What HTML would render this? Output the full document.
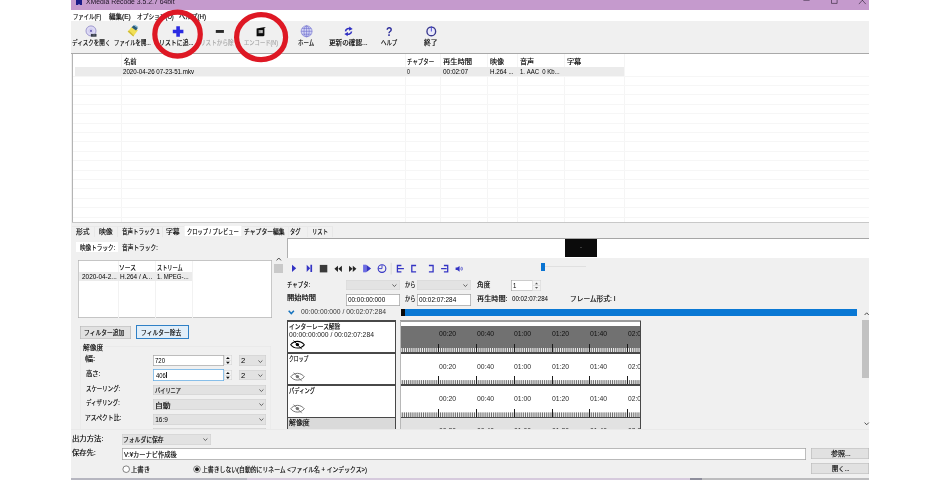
<!DOCTYPE html>
<html lang="ja"><head><meta charset="utf-8"><title>XMedia Recode 3.5.2.7 64bit</title>
<style>
html,body{margin:0;padding:0}
body{width:940px;height:480px;position:relative;overflow:hidden;background:#fff;font-family:"Liberation Sans",sans-serif;font-size:5.6px;color:#000}
.b{position:absolute;box-sizing:border-box}
.t{position:absolute;overflow:visible;display:block;stroke-width:2.2}
.t text{font-family:"Liberation Sans","Noto Sans CJK JP",sans-serif;font-size:100px}
.l{position:absolute;white-space:pre;line-height:1;transform-origin:0 50%;display:block}
.i{position:absolute;overflow:visible;display:block}
</style></head>
<body>
<div id="window" style="will-change:transform">
<div class="b" style="left:71px;top:0px;width:798px;height:478px;background:#f0f0f0;"></div>
<div id="titlebar">
<div class="b" style="left:71px;top:0px;width:798px;height:9.5px;background:#c59acd;"></div>
<div class="b" style="left:76.4px;top:0px;width:5.6px;height:4.8px;background:#1b1b88;"></div>
<div class="b" style="left:78.4px;top:3.6px;width:1.6px;height:1.2px;background:#7a6fc0;"></div>
<span class="l" style="left:86.34px;top:-1px;font-size:6.8px;color:#1e1424;transform:scaleX(1.01);">XMedia&nbsp;Recode&nbsp;3.5.2.7&nbsp;64bit</span>
<svg class="i" style="left:800px;top:0;width:69px;height:6px" viewBox="800 0 69 6" fill="none" stroke="#2a1e30" stroke-width="0.6"><path d="M803.4 0.3h6.2"/><path d="M831.5 -2v5.4h5.6v-5.4"/><path d="M858.9 4.1l3.45 -3.9l3.45 3.9M860.6 -1.4l1.75 1.6l1.75 -1.6"/></svg>
</div>
<div id="menubar">
<div class="b" style="left:71px;top:9.5px;width:798px;height:11.7px;background:#fff;"></div>
<svg class="t" style="left:73.02px;top:10.88px;width:28.28px;height:9.66px;fill:#000;stroke:#000;" viewBox="0 -110.5 522.8 140" preserveAspectRatio="none"><text x="0" y="0" textLength="522.8" lengthAdjust="spacingAndGlyphs">ファイル(F)</text></svg>
<svg class="t" style="left:108.63px;top:10.88px;width:21.79px;height:9.66px;fill:#000;stroke:#000;" viewBox="0 -110.5 326.5 140" preserveAspectRatio="none"><text x="0" y="0" textLength="326.5" lengthAdjust="spacingAndGlyphs">編集(E)</text></svg>
<svg class="t" style="left:137.31px;top:10.88px;width:36.72px;height:9.66px;fill:#000;stroke:#000;" viewBox="0 -110.5 641.8 140" preserveAspectRatio="none"><text x="0" y="0" textLength="641.8" lengthAdjust="spacingAndGlyphs">オプション(O)</text></svg>
<svg class="t" style="left:179.12px;top:10.88px;width:27.05px;height:9.66px;fill:#000;stroke:#000;" viewBox="0 -110.5 440.4 140" preserveAspectRatio="none"><text x="0" y="0" textLength="440.4" lengthAdjust="spacingAndGlyphs">ヘルプ(H)</text></svg>
</div>
<div id="toolbar">
<div class="b" style="left:71px;top:21.3px;width:798px;height:32.2px;background:#f0f0f0;"></div>
<svg class="t" style="left:71.93px;top:37.48px;width:38.47px;height:9.66px;fill:#000;stroke:#000;" viewBox="0 -110.5 700 140" preserveAspectRatio="none"><text x="0" y="0" textLength="700" lengthAdjust="spacingAndGlyphs">ディスクを開く</text></svg>
<svg class="t" style="left:113.92px;top:37.48px;width:36.77px;height:9.66px;fill:#000;stroke:#000;" viewBox="0 -110.5 683.4 140" preserveAspectRatio="none"><text x="0" y="0" textLength="683.4" lengthAdjust="spacingAndGlyphs">ファイルを開...</text></svg>
<svg class="t" style="left:158.8px;top:37.48px;width:34.53px;height:9.66px;fill:#000;stroke:#000;" viewBox="0 -110.5 583.4 140" preserveAspectRatio="none"><text x="0" y="0" textLength="583.4" lengthAdjust="spacingAndGlyphs">リストに追...</text></svg>
<svg class="t" style="left:199.97px;top:37.48px;width:33.59px;height:9.66px;fill:#a8a8a8;stroke:#a8a8a8;" viewBox="0 -110.5 600 140" preserveAspectRatio="none"><text x="0" y="0" textLength="600" lengthAdjust="spacingAndGlyphs">リストから除</text></svg>
<svg class="t" style="left:244.25px;top:37.48px;width:33.93px;height:9.66px;fill:#a8a8a8;stroke:#a8a8a8;" viewBox="0 -110.5 639.9 140" preserveAspectRatio="none"><text x="0" y="0" textLength="639.9" lengthAdjust="spacingAndGlyphs">エンコード(N)</text></svg>
<svg class="t" style="left:297.66px;top:37.48px;width:16.19px;height:9.66px;fill:#000;stroke:#000;" viewBox="0 -110.5 300 140" preserveAspectRatio="none"><text x="0" y="0" textLength="300" lengthAdjust="spacingAndGlyphs">ホーム</text></svg>
<svg class="t" style="left:328.89px;top:37.48px;width:38.59px;height:9.66px;fill:#000;stroke:#000;" viewBox="0 -110.5 583.4 140" preserveAspectRatio="none"><text x="0" y="0" textLength="583.4" lengthAdjust="spacingAndGlyphs">更新の確認...</text></svg>
<svg class="t" style="left:381.06px;top:37.48px;width:16.32px;height:9.66px;fill:#000;stroke:#000;" viewBox="0 -110.5 300 140" preserveAspectRatio="none"><text x="0" y="0" textLength="300" lengthAdjust="spacingAndGlyphs">ヘルプ</text></svg>
<svg class="t" style="left:424.33px;top:37.48px;width:13.63px;height:9.66px;fill:#000;stroke:#000;" viewBox="0 -110.5 200 140" preserveAspectRatio="none"><text x="0" y="0" textLength="200" lengthAdjust="spacingAndGlyphs">終了</text></svg>
<svg class="i" id="toolbar-icons" style="left:71px;top:21px;width:400px;height:20px" viewBox="71 21 400 20"><circle cx="91" cy="30.9" r="5" fill="#dddaf5" stroke="#9590c8" stroke-width="0.9"/><circle cx="91" cy="30.9" r="2.2" fill="none" stroke="#c4c0ea" stroke-width="0.6"/><circle cx="91" cy="30.9" r="1.1" fill="#6e64b6"/><rect x="90.9" y="33.9" width="5.6" height="2.8" fill="#343a46"/><rect x="92.6" y="34.7" width="2.6" height="0.6" fill="#8a94a4"/><path d="M127.7 31.4l4.2 -4.6l6 3.4l-4.6 6.2z" fill="#f1df56"/><path d="M127.7 31.4l5.6 5l0.7 -0.9l-5 -4.9z" fill="#cfbb38"/><path d="M131.6 27.3l2.2 -2l4 2.6l-1.8 2.6z" fill="#2b5c7c"/><path d="M133.8 25.3l1.1 -0.5l3.3 2.2l-0.4 0.9z" fill="#7fb2cf"/><path d="M176.3 26.3h3.6v3.5h3.5v3.5h-3.5v3.4h-3.6v-3.4h-3.5v-3.5h3.5z" fill="#2b2be2"/><rect x="215.8" y="30" width="8.1" height="2.9" fill="#2a2a2a"/><path d="M256.6 28.6l7.2 -1.4l2.2 -0.2l-1.6 1v7.6l-1 0.6h-6.8z" fill="#0c0c0c"/><rect x="258.6" y="30" width="4.2" height="3.2" fill="#9a9a9a"/><rect x="260.6" y="30.4" width="1.8" height="2.4" fill="#c4c4c4"/><g fill="none" stroke="#6c6ccc" stroke-width="0.6"><circle cx="306.6" cy="31.3" r="5.5" fill="#d2d3f5"/><ellipse cx="306.6" cy="31.3" rx="2.6" ry="5.5"/><path d="M306.6 25.8v11M301.1 31.3h11M302 28.4h9.2M302 34.2h9.2"/></g><g fill="none" stroke="#3030c2" stroke-width="1.6"><path d="M345.5 31.3c0.3 -2.6 3.2 -3.4 5.2 -2.3"/><path d="M351.5 31.5c-0.3 2.6 -3.2 3.4 -5.2 2.3"/></g><path d="M349.3 26.6l3.4 2.3l-3.7 1.9z" fill="#3030c2"/><path d="M347.7 36.2l-3.4 -2.3l3.7 -1.9z" fill="#3030c2"/><circle cx="431.3" cy="31.4" r="4.35" fill="#e9e9fb" stroke="#38388e" stroke-width="1.35"/><rect x="430.85" y="26.3" width="0.9" height="5.2" fill="#4040d4"/></svg>
<span class="l" style="left:386.31px;top:26px;font-size:12.5px;color:#2c2c9a;transform:scaleX(0.85);font-weight:bold;">?</span>
</div>
<div id="filelist">
<div class="b" style="left:71px;top:53.4px;width:798px;height:1.1px;background:#a9a9a9;"></div>
<div class="b" style="left:72px;top:54.2px;width:797px;height:168.1px;background:#fff;"></div>
<div class="b" style="left:71.7px;top:54.2px;width:1.1px;height:168.1px;background:#b4b4b4;"></div>
<div class="b" style="left:72px;top:221.8px;width:797px;height:0.8px;background:#c8c8c8;"></div>
<div class="b" style="left:120.75px;top:54.2px;width:0.5px;height:167.6px;background:#f5f5f5;"></div>
<div class="b" style="left:405.25px;top:54.2px;width:0.5px;height:167.6px;background:#f5f5f5;"></div>
<div class="b" style="left:440.25px;top:54.2px;width:0.5px;height:167.6px;background:#f5f5f5;"></div>
<div class="b" style="left:487.25px;top:54.2px;width:0.5px;height:167.6px;background:#f5f5f5;"></div>
<div class="b" style="left:517.25px;top:54.2px;width:0.5px;height:167.6px;background:#f5f5f5;"></div>
<div class="b" style="left:563.5px;top:54.2px;width:0.5px;height:167.6px;background:#f5f5f5;"></div>
<div class="b" style="left:623.5px;top:54.2px;width:0.5px;height:167.6px;background:#f5f5f5;"></div>
<div class="b" style="left:72.8px;top:75.65px;width:796.2px;height:0.5px;background:#f6f6f6;"></div>
<div class="b" style="left:72.8px;top:85.05px;width:796.2px;height:0.5px;background:#f6f6f6;"></div>
<div class="b" style="left:72.8px;top:94.45px;width:796.2px;height:0.5px;background:#f6f6f6;"></div>
<div class="b" style="left:72.8px;top:103.85px;width:796.2px;height:0.5px;background:#f6f6f6;"></div>
<div class="b" style="left:72.8px;top:113.25px;width:796.2px;height:0.5px;background:#f6f6f6;"></div>
<div class="b" style="left:72.8px;top:122.65px;width:796.2px;height:0.5px;background:#f6f6f6;"></div>
<div class="b" style="left:72.8px;top:132.05px;width:796.2px;height:0.5px;background:#f6f6f6;"></div>
<div class="b" style="left:72.8px;top:141.45px;width:796.2px;height:0.5px;background:#f6f6f6;"></div>
<div class="b" style="left:72.8px;top:150.85px;width:796.2px;height:0.5px;background:#f6f6f6;"></div>
<div class="b" style="left:72.8px;top:160.25px;width:796.2px;height:0.5px;background:#f6f6f6;"></div>
<div class="b" style="left:72.8px;top:169.65px;width:796.2px;height:0.5px;background:#f6f6f6;"></div>
<div class="b" style="left:72.8px;top:179.05px;width:796.2px;height:0.5px;background:#f6f6f6;"></div>
<div class="b" style="left:72.8px;top:188.45px;width:796.2px;height:0.5px;background:#f6f6f6;"></div>
<div class="b" style="left:72.8px;top:197.85px;width:796.2px;height:0.5px;background:#f6f6f6;"></div>
<div class="b" style="left:72.8px;top:207.25px;width:796.2px;height:0.5px;background:#f6f6f6;"></div>
<div class="b" style="left:72.8px;top:216.65px;width:796.2px;height:0.5px;background:#f6f6f6;"></div>
<div class="b" style="left:75px;top:66.8px;width:548.75px;height:8.95px;background:#ebebeb;"></div>
<svg class="t" style="left:123.99px;top:55.98px;width:12.54px;height:9.66px;fill:#000;stroke:#000;" viewBox="0 -110.5 200 140" preserveAspectRatio="none"><text x="0" y="0" textLength="200" lengthAdjust="spacingAndGlyphs">名前</text></svg>
<svg class="t" style="left:407.02px;top:55.98px;width:27.29px;height:9.66px;fill:#000;stroke:#000;" viewBox="0 -110.5 500 140" preserveAspectRatio="none"><text x="0" y="0" textLength="500" lengthAdjust="spacingAndGlyphs">チャプター</text></svg>
<svg class="t" style="left:442.71px;top:55.98px;width:29.15px;height:9.66px;fill:#000;stroke:#000;" viewBox="0 -110.5 400 140" preserveAspectRatio="none"><text x="0" y="0" textLength="400" lengthAdjust="spacingAndGlyphs">再生時間</text></svg>
<svg class="t" style="left:489.97px;top:55.98px;width:14.01px;height:9.66px;fill:#000;stroke:#000;" viewBox="0 -110.5 200 140" preserveAspectRatio="none"><text x="0" y="0" textLength="200" lengthAdjust="spacingAndGlyphs">映像</text></svg>
<svg class="t" style="left:520.11px;top:55.98px;width:14.13px;height:9.66px;fill:#000;stroke:#000;" viewBox="0 -110.5 200 140" preserveAspectRatio="none"><text x="0" y="0" textLength="200" lengthAdjust="spacingAndGlyphs">音声</text></svg>
<svg class="t" style="left:566.5px;top:55.98px;width:14.22px;height:9.66px;fill:#000;stroke:#000;" viewBox="0 -110.5 200 140" preserveAspectRatio="none"><text x="0" y="0" textLength="200" lengthAdjust="spacingAndGlyphs">字幕</text></svg>
<span class="l" style="left:123.19px;top:69px;font-size:6.5px;color:#000;transform:scaleX(0.95);">2020-04-26&nbsp;07-23-51.mkv</span>
<span class="l" style="left:407.3px;top:69px;font-size:6.5px;color:#000;transform:scaleX(0.81);">0</span>
<span class="l" style="left:442.75px;top:69px;font-size:6.5px;color:#000;transform:scaleX(0.99);">00:02:07</span>
<span class="l" style="left:489.99px;top:69px;font-size:6.5px;color:#000;transform:scaleX(0.96);">H.264&nbsp;...</span>
<span class="l" style="left:520.05px;top:69px;font-size:6.5px;color:#000;transform:scaleX(0.92);">1.&nbsp;AAC&nbsp;&nbsp;0&nbsp;Kb...</span>
</div>
<div id="tabs">
<div class="b" style="left:94.1px;top:226px;width:0.6px;height:10.8px;background:#e8e8e8;"></div>
<div class="b" style="left:117.1px;top:226px;width:0.6px;height:10.8px;background:#e8e8e8;"></div>
<div class="b" style="left:161.9px;top:226px;width:0.6px;height:10.8px;background:#e8e8e8;"></div>
<div class="b" style="left:71.8px;top:225.8px;width:112px;height:0.5px;background:#e9e9e9;"></div>
<div class="b" style="left:241.3px;top:225.8px;width:90.7px;height:0.5px;background:#e9e9e9;"></div>
<div class="b" style="left:332px;top:226px;width:0.5px;height:10.8px;background:#e8e8e8;"></div>
<div class="b" style="left:288px;top:226px;width:0.5px;height:10.8px;background:#eaeaea;"></div>
<div class="b" style="left:306.5px;top:226px;width:0.5px;height:10.8px;background:#eaeaea;"></div>
<div class="b" style="left:184.2px;top:225.2px;width:57.4px;height:11.6px;background:#fff;box-shadow:inset 0 0 0 0.4px #e4e4e4;"></div>
<svg class="t" style="left:76.35px;top:225.88px;width:13.68px;height:9.66px;fill:#000;stroke:#000;" viewBox="0 -110.5 200 140" preserveAspectRatio="none"><text x="0" y="0" textLength="200" lengthAdjust="spacingAndGlyphs">形式</text></svg>
<svg class="t" style="left:98.78px;top:225.88px;width:13.74px;height:9.66px;fill:#000;stroke:#000;" viewBox="0 -110.5 200 140" preserveAspectRatio="none"><text x="0" y="0" textLength="200" lengthAdjust="spacingAndGlyphs">映像</text></svg>
<svg class="t" style="left:121.8px;top:225.88px;width:37.46px;height:9.66px;fill:#000;stroke:#000;" viewBox="0 -110.5 685.5 140" preserveAspectRatio="none"><text x="0" y="0" textLength="685.5" lengthAdjust="spacingAndGlyphs">音声トラック 1</text></svg>
<svg class="t" style="left:165.82px;top:225.88px;width:13.59px;height:9.66px;fill:#000;stroke:#000;" viewBox="0 -110.5 200 140" preserveAspectRatio="none"><text x="0" y="0" textLength="200" lengthAdjust="spacingAndGlyphs">字幕</text></svg>
<svg class="t" style="left:187.49px;top:225.88px;width:51.8px;height:9.66px;fill:#000;stroke:#000;" viewBox="0 -110.5 999.2 140" preserveAspectRatio="none"><text x="0" y="0" textLength="999.2" lengthAdjust="spacingAndGlyphs">クロップ / プレビュー</text></svg>
<svg class="t" style="left:244.49px;top:225.88px;width:40.7px;height:9.66px;fill:#000;stroke:#000;" viewBox="0 -110.5 700 140" preserveAspectRatio="none"><text x="0" y="0" textLength="700" lengthAdjust="spacingAndGlyphs">チャプター編集</text></svg>
<svg class="t" style="left:290.11px;top:225.88px;width:10.61px;height:9.66px;fill:#000;stroke:#000;" viewBox="0 -110.5 200 140" preserveAspectRatio="none"><text x="0" y="0" textLength="200" lengthAdjust="spacingAndGlyphs">タグ</text></svg>
<svg class="t" style="left:311.83px;top:225.88px;width:15.99px;height:9.66px;fill:#000;stroke:#000;" viewBox="0 -110.5 300 140" preserveAspectRatio="none"><text x="0" y="0" textLength="300" lengthAdjust="spacingAndGlyphs">リスト</text></svg>
</div>
<div id="leftpanel">
<div class="b" style="left:75.6px;top:241.8px;width:42.4px;height:10.6px;background:#fff;"></div>
<svg class="t" style="left:80.37px;top:242.03px;width:35.24px;height:9.66px;fill:#000;stroke:#000;" viewBox="0 -110.5 627.8 140" preserveAspectRatio="none"><text x="0" y="0" textLength="627.8" lengthAdjust="spacingAndGlyphs">映像トラック:</text></svg>
<svg class="t" style="left:121.69px;top:242.04px;width:35.73px;height:9.66px;fill:#000;stroke:#000;" viewBox="0 -110.5 627.8 140" preserveAspectRatio="none"><text x="0" y="0" textLength="627.8" lengthAdjust="spacingAndGlyphs">音声トラック:</text></svg>
<div class="b" style="left:78.4px;top:259.8px;width:193.8px;height:58.4px;background:#fff;box-shadow:inset 0 0 0 0.7px #b2b2b2;"></div>
<div class="b" style="left:117.75px;top:260.5px;width:0.5px;height:57px;background:#f2f2f2;"></div>
<div class="b" style="left:154.75px;top:260.5px;width:0.5px;height:57px;background:#f2f2f2;"></div>
<div class="b" style="left:192.25px;top:260.5px;width:0.5px;height:57px;background:#f2f2f2;"></div>
<div class="b" style="left:79.1px;top:272.4px;width:113.2px;height:9.1px;background:#ebebeb;"></div>
<svg class="t" style="left:119px;top:261.9px;width:16.97px;height:9.66px;fill:#000;stroke:#000;" viewBox="0 -110.5 300 140" preserveAspectRatio="none"><text x="0" y="0" textLength="300" lengthAdjust="spacingAndGlyphs">ソース</text></svg>
<svg class="t" style="left:157.18px;top:262px;width:25.76px;height:9.66px;fill:#000;stroke:#000;" viewBox="0 -110.5 500 140" preserveAspectRatio="none"><text x="0" y="0" textLength="500" lengthAdjust="spacingAndGlyphs">ストリーム</text></svg>
<span class="l" style="left:81.78px;top:274px;font-size:6.5px;color:#000;transform:scaleX(0.99);">2020-04-2...</span>
<span class="l" style="left:119.57px;top:274px;font-size:6.5px;color:#000;transform:scaleX(0.99);">H.264&nbsp;/&nbsp;A...</span>
<span class="l" style="left:157.24px;top:274px;font-size:6.5px;color:#000;transform:scaleX(0.93);">1.&nbsp;MPEG-...</span>
<div class="b" style="left:274.3px;top:257.5px;width:8.9px;height:172.5px;background:#f0f0f0;"></div>
<svg class="i" style="left:275.6px;top:256.6px;width:5.6px;height:4px" viewBox="0 0 5.6 4" fill="none" stroke="#444" stroke-width="0.95"><path d="M0.6 3.4l2.2 -2.4l2.2 2.4"/></svg>
<div class="b" style="left:274.3px;top:264px;width:8.5px;height:8.6px;background:#c9c9c9;"></div>
<div class="b" style="left:79.6px;top:325.9px;width:51.3px;height:13px;background:#e1e1e1;box-shadow:inset 0 0 0 0.6px #b4b4b4;"></div>
<svg class="t" style="left:84.37px;top:327.2px;width:40.23px;height:9.66px;fill:#000;stroke:#000;" viewBox="0 -110.5 700 140" preserveAspectRatio="none"><text x="0" y="0" textLength="700" lengthAdjust="spacingAndGlyphs">フィルター追加</text></svg>
<div class="b" style="left:136.1px;top:325px;width:52.6px;height:14.1px;background:#e1eef9;box-shadow:inset 0 0 0 1px #2f80c6;"></div>
<svg class="t" style="left:141.27px;top:327.17px;width:40.21px;height:9.66px;fill:#000;stroke:#000;" viewBox="0 -110.5 700 140" preserveAspectRatio="none"><text x="0" y="0" textLength="700" lengthAdjust="spacingAndGlyphs">フィルター除去</text></svg>
<div class="b" style="left:80px;top:346px;width:191.3px;height:85px;box-shadow:inset 0 0 0 0.4px #e4e4e4;"></div>
<div class="b" style="left:82.5px;top:343px;width:22.5px;height:6.5px;background:#f0f0f0;"></div>
<svg class="t" style="left:83.38px;top:341.59px;width:20.18px;height:9.66px;fill:#000;stroke:#000;" viewBox="0 -110.5 300 140" preserveAspectRatio="none"><text x="0" y="0" textLength="300" lengthAdjust="spacingAndGlyphs">解像度</text></svg>
<svg class="t" style="left:85.27px;top:352.79px;width:10.32px;height:9.66px;fill:#000;stroke:#000;" viewBox="0 -110.5 127.8 140" preserveAspectRatio="none"><text x="0" y="0" textLength="127.8" lengthAdjust="spacingAndGlyphs">幅:</text></svg>
<div class="b" style="left:153.1px;top:354.8px;width:70.8px;height:11.2px;background:#fff;box-shadow:inset 0 0 0 0.7px #a8a8a8;"></div>
<span class="l" style="left:155.39px;top:358px;font-size:6.5px;color:#000;transform:scaleX(0.92);">720</span>
<div class="b" style="left:223.6px;top:355.15px;width:8.9px;height:10.3px;background:#f3f3f3;box-shadow:inset 0 0 0 0.5px #d2d2d2;"></div>
<div class="b" style="left:224.1px;top:360.1px;width:7.9px;height:0.4px;background:#e2e2e2;"></div>
<svg class="i" style="left:226.15px;top:355.15px;width:3.8px;height:10.3px" viewBox="0 0 3.8 10.3" fill="#111"><path d="M0 4.12L1.9 2.02L3.8 4.12ZM0 6.85L1.9 8.95L3.8 6.85Z"/></svg>
<div class="b" style="left:239.4px;top:355px;width:26.3px;height:10.6px;background:#e2e2e2;box-shadow:inset 0 0 0 0.5px #cdcdcd;"></div>
<span class="l" style="left:241.01px;top:358px;font-size:6.5px;color:#000;transform:scaleX(1.18);">2</span>
<svg class="i" style="left:258.35px;top:359.6px;width:4.8px;height:3px" viewBox="0 0 4.8 3" fill="none" stroke="#4a4a4a" stroke-width="0.85"><path d="M0.4 0.5l2 2l2 -2"/></svg>
<svg class="t" style="left:85.59px;top:367.8px;width:14.48px;height:9.66px;fill:#000;stroke:#000;" viewBox="0 -110.5 227.8 140" preserveAspectRatio="none"><text x="0" y="0" textLength="227.8" lengthAdjust="spacingAndGlyphs">高さ:</text></svg>
<div class="b" style="left:153.1px;top:369.3px;width:70.8px;height:11.3px;background:#fff;box-shadow:inset 0 0 0 0.7px #62aae2;"></div>
<span class="l" style="left:155.57px;top:373px;font-size:6.5px;color:#000;transform:scaleX(0.9);">406</span>
<div class="b" style="left:165.6px;top:372.2px;width:0.5px;height:6px;background:#222;"></div>
<div class="b" style="left:223.6px;top:369.75px;width:8.9px;height:10.3px;background:#f3f3f3;box-shadow:inset 0 0 0 0.5px #d2d2d2;"></div>
<div class="b" style="left:224.1px;top:374.7px;width:7.9px;height:0.4px;background:#e2e2e2;"></div>
<svg class="i" style="left:226.15px;top:369.75px;width:3.8px;height:10.3px" viewBox="0 0 3.8 10.3" fill="#111"><path d="M0 4.12L1.9 2.02L3.8 4.12ZM0 6.85L1.9 8.95L3.8 6.85Z"/></svg>
<div class="b" style="left:239.4px;top:369.6px;width:26.3px;height:10.6px;background:#e2e2e2;box-shadow:inset 0 0 0 0.5px #cdcdcd;"></div>
<span class="l" style="left:241.11px;top:373px;font-size:6.5px;color:#000;transform:scaleX(1.18);">2</span>
<svg class="i" style="left:258.35px;top:374.2px;width:4.8px;height:3px" viewBox="0 0 4.8 3" fill="none" stroke="#4a4a4a" stroke-width="0.85"><path d="M0.4 0.5l2 2l2 -2"/></svg>
<svg class="t" style="left:85.56px;top:382.84px;width:34.14px;height:9.66px;fill:#000;stroke:#000;" viewBox="0 -110.5 627.8 140" preserveAspectRatio="none"><text x="0" y="0" textLength="627.8" lengthAdjust="spacingAndGlyphs">スケーリング:</text></svg>
<div class="b" style="left:153.4px;top:384.9px;width:112.6px;height:10.4px;background:#e2e2e2;box-shadow:inset 0 0 0 0.5px #cdcdcd;"></div>
<svg class="t" style="left:154.97px;top:384.86px;width:25.99px;height:9.66px;fill:#000;stroke:#000;" viewBox="0 -110.5 500 140" preserveAspectRatio="none"><text x="0" y="0" textLength="500" lengthAdjust="spacingAndGlyphs">バイリニア</text></svg>
<svg class="i" style="left:258.6px;top:388.5px;width:4.8px;height:3px" viewBox="0 0 4.8 3" fill="none" stroke="#4a4a4a" stroke-width="0.85"><path d="M0.4 0.5l2 2l2 -2"/></svg>
<svg class="t" style="left:85.64px;top:397.45px;width:33.65px;height:9.66px;fill:#000;stroke:#000;" viewBox="0 -110.5 627.8 140" preserveAspectRatio="none"><text x="0" y="0" textLength="627.8" lengthAdjust="spacingAndGlyphs">ディザリング:</text></svg>
<div class="b" style="left:153.4px;top:398.9px;width:112.6px;height:10.7px;background:#e2e2e2;box-shadow:inset 0 0 0 0.5px #cdcdcd;"></div>
<svg class="t" style="left:154.52px;top:399.59px;width:15.66px;height:9.66px;fill:#000;stroke:#000;" viewBox="0 -110.5 200 140" preserveAspectRatio="none"><text x="0" y="0" textLength="200" lengthAdjust="spacingAndGlyphs">自動</text></svg>
<svg class="i" style="left:258.6px;top:402.9px;width:4.8px;height:3px" viewBox="0 0 4.8 3" fill="none" stroke="#4a4a4a" stroke-width="0.85"><path d="M0.4 0.5l2 2l2 -2"/></svg>
<svg class="t" style="left:85.39px;top:411.96px;width:36.13px;height:9.66px;fill:#000;stroke:#000;" viewBox="0 -110.5 627.8 140" preserveAspectRatio="none"><text x="0" y="0" textLength="627.8" lengthAdjust="spacingAndGlyphs">アスペクト比:</text></svg>
<div class="b" style="left:153.4px;top:413.5px;width:112.6px;height:11px;background:#e2e2e2;box-shadow:inset 0 0 0 0.5px #cdcdcd;"></div>
<span class="l" style="left:155.2px;top:417px;font-size:6.5px;color:#000;">16:9</span>
<svg class="i" style="left:258.6px;top:417.7px;width:4.8px;height:3px" viewBox="0 0 4.8 3" fill="none" stroke="#4a4a4a" stroke-width="0.85"><path d="M0.4 0.5l2 2l2 -2"/></svg>
<div class="b" style="left:153.4px;top:428px;width:112.6px;height:4px;background:#e2e2e2;box-shadow:inset 0 0 0 0.5px #cdcdcd;"></div>
<svg class="t" style="left:85.72px;top:426.61px;width:35.6px;height:9.66px;fill:#000;stroke:#000;" viewBox="0 -110.5 827.8 140" preserveAspectRatio="none"><text x="0" y="0" textLength="827.8" lengthAdjust="spacingAndGlyphs">アスペクトエラー:</text></svg>
</div>
<div id="rightpanel">
<div class="b" style="left:286.6px;top:238.4px;width:582.4px;height:19.2px;background:#fff;"></div>
<div class="b" style="left:286.6px;top:238.3px;width:582.4px;height:1px;background:#a6a6a6;"></div>
<div class="b" style="left:286.6px;top:238.3px;width:0.8px;height:19.3px;background:#b0b0b0;"></div>
<div class="b" style="left:565px;top:239.2px;width:31.8px;height:17.9px;background:#0b0b0b;"></div>
<div class="b" style="left:579.5px;top:247.3px;width:2.5px;height:0.4px;background:#3a3a3a;"></div>
<svg class="i" id="transport" style="left:286px;top:258px;width:190px;height:20px" viewBox="286 258 190 20"><path d="M292 264.8v7.1l4.2 -3.55z" fill="#3434c4"/><path d="M306.7 264.8v7.1l3.5 -3.55zM310.4 264.8h1.7v7.1h-1.7z" fill="#3434c4"/><rect x="319.8" y="264.9" width="7.5" height="7.5" fill="#3a3a3a"/><path d="M338 265.7v6.2l-3.6 -3.1zM341.9 265.7v6.2l-3.6 -3.1z" fill="#262626"/><path d="M349 265.7v6.2l3.6 -3.1zM352.8 265.7v6.2l3.6 -3.1z" fill="#262626"/><rect x="363.1" y="264.7" width="3" height="7.6" fill="#6c6ce4"/><path d="M366.3 264.7v7.6l4.8 -3.8z" fill="#3434c4"/><g fill="none" stroke="#3434c4" stroke-width="1.1"><circle cx="382" cy="268.55" r="3.85"/><path d="M382 265.2v3.4h-3.4" stroke-width="0.9"/></g><rect x="390.8" y="262.8" width="0.6" height="11.7" fill="#c6c6c6"/><g fill="none" stroke="#3434c4" stroke-width="1.3"><path d="M401.4 265.5h-4v6.3h4M398 268.65h5.9"/><path d="M416.1 265.5h-4.3v6.3h4.3"/><path d="M428.9 265.5h4.2v6.3h-4.2"/><path d="M443.9 265.5h3.8v6.3h-3.8M441.1 268.65h5.6"/></g><path d="M455.6 267.6h1.6l2.4 -1.7v5.8l-2.4 -1.7h-1.6z" fill="#3434c4"/><rect x="460.9" y="267.3" width="1.5" height="2.9" rx="0.7" fill="none" stroke="#3434c4" stroke-width="0.6"/></svg>
<div class="b" style="left:545px;top:266.4px;width:40.5px;height:0.9px;background:#e0e0e0;"></div>
<div class="b" style="left:541.2px;top:262.5px;width:3.8px;height:8.8px;background:#0a74d2;"></div>
<svg class="t" style="left:286.82px;top:278.63px;width:23.17px;height:9.66px;fill:#000;stroke:#000;" viewBox="0 -110.5 427.8 140" preserveAspectRatio="none"><text x="0" y="0" textLength="427.8" lengthAdjust="spacingAndGlyphs">チャプタ:</text></svg>
<div class="b" style="left:346.3px;top:279.6px;width:53.6px;height:10.8px;background:#e3e3e3;box-shadow:inset 0 0 0 0.4px #d6d6d6;"></div>
<svg class="i" style="left:392.1px;top:283.8px;width:4.8px;height:3px" viewBox="0 0 4.8 3" fill="none" stroke="#4a4a4a" stroke-width="0.85"><path d="M0.4 0.5l2 2l2 -2"/></svg>
<svg class="t" style="left:404.79px;top:278.76px;width:10.48px;height:9.66px;fill:#000;stroke:#000;" viewBox="0 -110.5 200 140" preserveAspectRatio="none"><text x="0" y="0" textLength="200" lengthAdjust="spacingAndGlyphs">から</text></svg>
<div class="b" style="left:417.3px;top:279.6px;width:53.5px;height:10.8px;background:#e3e3e3;box-shadow:inset 0 0 0 0.4px #d6d6d6;"></div>
<svg class="i" style="left:463.1px;top:283.8px;width:4.8px;height:3px" viewBox="0 0 4.8 3" fill="none" stroke="#4a4a4a" stroke-width="0.85"><path d="M0.4 0.5l2 2l2 -2"/></svg>
<svg class="t" style="left:476.58px;top:278.69px;width:13.28px;height:9.66px;fill:#000;stroke:#000;" viewBox="0 -110.5 200 140" preserveAspectRatio="none"><text x="0" y="0" textLength="200" lengthAdjust="spacingAndGlyphs">角度</text></svg>
<div class="b" style="left:511.2px;top:279.5px;width:30.1px;height:11.8px;background:#fff;box-shadow:inset 0 0 0 0.6px #9a9a9a;"></div>
<span class="l" style="left:512.94px;top:283px;font-size:6.5px;color:#000;transform:scaleX(0.93);">1</span>
<div class="b" style="left:532.3px;top:280.1px;width:8.7px;height:10.6px;background:#f3f3f3;box-shadow:inset 0 0 0 0.5px #d2d2d2;"></div>
<div class="b" style="left:532.8px;top:285.2px;width:7.7px;height:0.4px;background:#e2e2e2;"></div>
<svg class="i" style="left:535.13px;top:280.1px;width:3.04px;height:10.6px" viewBox="0 0 3.04 10.6" fill="#555"><path d="M0 4.24L1.52 2.56L3.04 4.24ZM0 7.05L1.52 8.73L3.04 7.05Z"/></svg>
<svg class="t" style="left:286.85px;top:292.39px;width:29.06px;height:9.66px;fill:#000;stroke:#000;" viewBox="0 -110.5 400 140" preserveAspectRatio="none"><text x="0" y="0" textLength="400" lengthAdjust="spacingAndGlyphs">開始時間</text></svg>
<div class="b" style="left:346.3px;top:294.3px;width:53.6px;height:11.7px;background:#fff;box-shadow:inset 0 0 0 0.7px #a2a2a2;"></div>
<span class="l" style="left:347.95px;top:297px;font-size:6.5px;color:#000;transform:scaleX(0.98);">00:00:00:000</span>
<svg class="t" style="left:404.79px;top:293.46px;width:10.48px;height:9.66px;fill:#000;stroke:#000;" viewBox="0 -110.5 200 140" preserveAspectRatio="none"><text x="0" y="0" textLength="200" lengthAdjust="spacingAndGlyphs">から</text></svg>
<div class="b" style="left:417.3px;top:294.3px;width:53.5px;height:11.7px;background:#fff;box-shadow:inset 0 0 0 0.7px #a2a2a2;"></div>
<span class="l" style="left:418.65px;top:297px;font-size:6.5px;color:#000;transform:scaleX(0.98);">00:02:07:284</span>
<svg class="t" style="left:476.51px;top:293.09px;width:30.61px;height:9.66px;fill:#000;stroke:#000;" viewBox="0 -110.5 427.8 140" preserveAspectRatio="none"><text x="0" y="0" textLength="427.8" lengthAdjust="spacingAndGlyphs">再生時間:</text></svg>
<span class="l" style="left:511.96px;top:296px;font-size:6.5px;color:#000;transform:scaleX(0.95);">00:02:07:284</span>
<svg class="t" style="left:569.84px;top:293.06px;width:45.52px;height:9.66px;fill:#000;stroke:#000;" viewBox="0 -110.5 687.1 140" preserveAspectRatio="none"><text x="0" y="0" textLength="687.1" lengthAdjust="spacingAndGlyphs">フレーム形式: I</text></svg>
<svg class="i" style="left:287.6px;top:309.9px;width:6.6px;height:4.6px" viewBox="0 0 6.6 4.6" fill="none" stroke="#1673be" stroke-width="1.5"><path d="M0.7 0.8l2.6 2.8l2.6 -2.8"/></svg>
<span class="l" style="left:300.99px;top:308px;font-size:7px;color:#363636;transform:scaleX(0.97);">00:00:00:000&nbsp;/&nbsp;00:02:07:284</span>
<div class="b" style="left:400.5px;top:308.7px;width:456.3px;height:7.5px;background:#0a78d4;"></div>
<div class="b" style="left:400.5px;top:308.7px;width:4.5px;height:7.5px;background:#0a0a0a;"></div>
<div class="b" style="left:862.3px;top:308px;width:6.7px;height:122px;background:#f0f0f0;"></div>
<svg class="i" style="left:863.6px;top:312.4px;width:5.4px;height:3.6px" viewBox="0 0 5.4 3.6" fill="none" stroke="#3c3c3c" stroke-width="0.9"><path d="M0.6 3l2.1 -2.2l2.1 2.2"/></svg>
<svg class="i" style="left:863.6px;top:421.8px;width:5.4px;height:3.6px" viewBox="0 0 5.4 3.6" fill="none" stroke="#3c3c3c" stroke-width="0.9"><path d="M0.6 0.6l2.1 2.2l2.1 -2.2"/></svg>
<div class="b" style="left:862.4px;top:319.6px;width:6.4px;height:58.4px;background:#c2c2c2;"></div>
<div id="filters" style="position:absolute;left:0;top:0;width:940px;height:430px;overflow:hidden">
<div class="b" style="left:287px;top:321.2px;width:108.9px;height:32.5px;background:#fff;"></div>
<svg class="t" style="left:289.11px;top:321.19px;width:51.35px;height:9.66px;fill:#000;stroke:#000;" viewBox="0 -110.5 900 140" preserveAspectRatio="none"><text x="0" y="0" textLength="900" lengthAdjust="spacingAndGlyphs">インターレース解除</text></svg>
<span class="l" style="left:289.34px;top:331px;font-size:7px;color:#1a1a1a;transform:scaleX(0.97);">00:00:00:000&nbsp;/&nbsp;00:02:07:284</span>
<svg class="i" style="left:289.6px;top:339.6px;width:15.2px;height:9.8px" viewBox="0 0 15.2 9.8" fill="none" stroke="#000" stroke-width="1.05"><path d="M0.7 4.8c3.4 -4.6 10 -4.6 13.6 0c-3.6 4.4 -10.2 4.4 -13.6 0z"/><circle cx="7.4" cy="4.6" r="1.7" fill="#000" stroke="none"/><path d="M3.6 0.6l8.2 8.6" stroke-width="0.95"/></svg>
<div class="b" style="left:400.4px;top:321.2px;width:240.6px;height:32.5px;background:#717171;"></div>
<div class="b" style="left:400.4px;top:321.2px;width:240.6px;height:4.4px;background:#fff;"></div>
<div class="b" style="left:400.4px;top:348px;width:240.6px;height:4.7px;background:#fff;"></div>
<svg class="i" style="left:0;top:0;width:940px;height:480px" viewBox="0 0 940 480"><path d="M400.8 352.7v-4.7M402.69 352.7v-4.7M404.58 352.7v-4.7M406.47 352.7v-4.7M408.36 352.7v-4.7M410.25 352.7v-4.7M412.14 352.7v-4.7M414.03 352.7v-4.7M415.92 352.7v-4.7M417.81 352.7v-4.7M419.7 352.7v-4.7M421.59 352.7v-4.7M423.48 352.7v-4.7M425.37 352.7v-4.7M427.26 352.7v-4.7M429.15 352.7v-4.7M431.04 352.7v-4.7M432.93 352.7v-4.7M434.82 352.7v-4.7M436.71 352.7v-4.7M438.6 352.7v-4.7M440.49 352.7v-4.7M442.38 352.7v-4.7M444.27 352.7v-4.7M446.16 352.7v-4.7M448.05 352.7v-4.7M449.94 352.7v-4.7M451.83 352.7v-4.7M453.72 352.7v-4.7M455.61 352.7v-4.7M457.5 352.7v-4.7M459.39 352.7v-4.7M461.28 352.7v-4.7M463.17 352.7v-4.7M465.06 352.7v-4.7M466.95 352.7v-4.7M468.84 352.7v-4.7M470.73 352.7v-4.7M472.62 352.7v-4.7M474.51 352.7v-4.7M476.4 352.7v-4.7M478.29 352.7v-4.7M480.18 352.7v-4.7M482.07 352.7v-4.7M483.96 352.7v-4.7M485.85 352.7v-4.7M487.74 352.7v-4.7M489.63 352.7v-4.7M491.52 352.7v-4.7M493.41 352.7v-4.7M495.3 352.7v-4.7M497.19 352.7v-4.7M499.08 352.7v-4.7M500.97 352.7v-4.7M502.86 352.7v-4.7M504.75 352.7v-4.7M506.64 352.7v-4.7M508.53 352.7v-4.7M510.42 352.7v-4.7M512.31 352.7v-4.7M514.2 352.7v-4.7M516.09 352.7v-4.7M517.98 352.7v-4.7M519.87 352.7v-4.7M521.76 352.7v-4.7M523.65 352.7v-4.7M525.54 352.7v-4.7M527.43 352.7v-4.7M529.32 352.7v-4.7M531.21 352.7v-4.7M533.1 352.7v-4.7M534.99 352.7v-4.7M536.88 352.7v-4.7M538.77 352.7v-4.7M540.66 352.7v-4.7M542.55 352.7v-4.7M544.44 352.7v-4.7M546.33 352.7v-4.7M548.22 352.7v-4.7M550.11 352.7v-4.7M552 352.7v-4.7M553.89 352.7v-4.7M555.78 352.7v-4.7M557.67 352.7v-4.7M559.56 352.7v-4.7M561.45 352.7v-4.7M563.34 352.7v-4.7M565.23 352.7v-4.7M567.12 352.7v-4.7M569.01 352.7v-4.7M570.9 352.7v-4.7M572.79 352.7v-4.7M574.68 352.7v-4.7M576.57 352.7v-4.7M578.46 352.7v-4.7M580.35 352.7v-4.7M582.24 352.7v-4.7M584.13 352.7v-4.7M586.02 352.7v-4.7M587.91 352.7v-4.7M589.8 352.7v-4.7M591.69 352.7v-4.7M593.58 352.7v-4.7M595.47 352.7v-4.7M597.36 352.7v-4.7M599.25 352.7v-4.7M601.14 352.7v-4.7M603.03 352.7v-4.7M604.92 352.7v-4.7M606.81 352.7v-4.7M608.7 352.7v-4.7M610.59 352.7v-4.7M612.48 352.7v-4.7M614.37 352.7v-4.7M616.26 352.7v-4.7M618.15 352.7v-4.7M620.04 352.7v-4.7M621.93 352.7v-4.7M623.82 352.7v-4.7M625.71 352.7v-4.7M627.6 352.7v-4.7M629.49 352.7v-4.7M631.38 352.7v-4.7M633.27 352.7v-4.7M635.16 352.7v-4.7M637.05 352.7v-4.7M638.94 352.7v-4.7" stroke="#383838" stroke-width="0.75" fill="none"/></svg>
<div class="b" style="left:438.25px;top:344.1px;width:0.7px;height:8.6px;background:#1c1c1c;"></div>
<span class="l" style="left:438.83px;top:330px;font-size:7px;color:#101010;transform:scaleX(0.98);">00:20</span>
<div class="b" style="left:476.05px;top:344.1px;width:0.7px;height:8.6px;background:#1c1c1c;"></div>
<span class="l" style="left:476.63px;top:330px;font-size:7px;color:#101010;transform:scaleX(0.98);">00:40</span>
<div class="b" style="left:513.85px;top:344.1px;width:0.7px;height:8.6px;background:#1c1c1c;"></div>
<span class="l" style="left:514.43px;top:330px;font-size:7px;color:#101010;transform:scaleX(0.98);">01:00</span>
<div class="b" style="left:551.65px;top:344.1px;width:0.7px;height:8.6px;background:#1c1c1c;"></div>
<span class="l" style="left:552.23px;top:330px;font-size:7px;color:#101010;transform:scaleX(0.98);">01:20</span>
<div class="b" style="left:589.45px;top:344.1px;width:0.7px;height:8.6px;background:#1c1c1c;"></div>
<span class="l" style="left:590.03px;top:330px;font-size:7px;color:#101010;transform:scaleX(0.98);">01:40</span>
<div class="b" style="left:627.25px;top:344.1px;width:0.7px;height:8.6px;background:#1c1c1c;"></div>
<div class="b" style="left:627.3px;top:330px;width:12.8px;height:8px;overflow:hidden">
<span class="l" style="left:0.8px;top:0;font-size:7px;color:#101010;transform:scaleX(0.954)">02:00</span>
</div>
<div class="b" style="left:287px;top:353.1px;width:108.9px;height:32.7px;background:#fff;"></div>
<svg class="t" style="left:289.12px;top:352.98px;width:19.46px;height:9.66px;fill:#000;stroke:#000;" viewBox="0 -110.5 400 140" preserveAspectRatio="none"><text x="0" y="0" textLength="400" lengthAdjust="spacingAndGlyphs">クロップ</text></svg>
<svg class="i" style="left:289.6px;top:371.7px;width:15.2px;height:9.8px" viewBox="0 0 15.2 9.8" fill="none" stroke="#747474" stroke-width="1"><path d="M0.7 4.8c3.4 -4.6 10 -4.6 13.6 0c-3.6 4.4 -10.2 4.4 -13.6 0z"/><circle cx="7.4" cy="4.6" r="1.7" fill="#747474" stroke="none"/><path d="M3.6 0.6l8.2 8.6" stroke-width="0.85"/></svg>
<div class="b" style="left:400.4px;top:353.1px;width:240.6px;height:32.7px;background:#fff;"></div>
<svg class="i" style="left:0;top:0;width:940px;height:480px" viewBox="0 0 940 480"><path d="M400.8 384.8v-4.7M402.69 384.8v-4.7M404.58 384.8v-4.7M406.47 384.8v-4.7M408.36 384.8v-4.7M410.25 384.8v-4.7M412.14 384.8v-4.7M414.03 384.8v-4.7M415.92 384.8v-4.7M417.81 384.8v-4.7M419.7 384.8v-4.7M421.59 384.8v-4.7M423.48 384.8v-4.7M425.37 384.8v-4.7M427.26 384.8v-4.7M429.15 384.8v-4.7M431.04 384.8v-4.7M432.93 384.8v-4.7M434.82 384.8v-4.7M436.71 384.8v-4.7M438.6 384.8v-4.7M440.49 384.8v-4.7M442.38 384.8v-4.7M444.27 384.8v-4.7M446.16 384.8v-4.7M448.05 384.8v-4.7M449.94 384.8v-4.7M451.83 384.8v-4.7M453.72 384.8v-4.7M455.61 384.8v-4.7M457.5 384.8v-4.7M459.39 384.8v-4.7M461.28 384.8v-4.7M463.17 384.8v-4.7M465.06 384.8v-4.7M466.95 384.8v-4.7M468.84 384.8v-4.7M470.73 384.8v-4.7M472.62 384.8v-4.7M474.51 384.8v-4.7M476.4 384.8v-4.7M478.29 384.8v-4.7M480.18 384.8v-4.7M482.07 384.8v-4.7M483.96 384.8v-4.7M485.85 384.8v-4.7M487.74 384.8v-4.7M489.63 384.8v-4.7M491.52 384.8v-4.7M493.41 384.8v-4.7M495.3 384.8v-4.7M497.19 384.8v-4.7M499.08 384.8v-4.7M500.97 384.8v-4.7M502.86 384.8v-4.7M504.75 384.8v-4.7M506.64 384.8v-4.7M508.53 384.8v-4.7M510.42 384.8v-4.7M512.31 384.8v-4.7M514.2 384.8v-4.7M516.09 384.8v-4.7M517.98 384.8v-4.7M519.87 384.8v-4.7M521.76 384.8v-4.7M523.65 384.8v-4.7M525.54 384.8v-4.7M527.43 384.8v-4.7M529.32 384.8v-4.7M531.21 384.8v-4.7M533.1 384.8v-4.7M534.99 384.8v-4.7M536.88 384.8v-4.7M538.77 384.8v-4.7M540.66 384.8v-4.7M542.55 384.8v-4.7M544.44 384.8v-4.7M546.33 384.8v-4.7M548.22 384.8v-4.7M550.11 384.8v-4.7M552 384.8v-4.7M553.89 384.8v-4.7M555.78 384.8v-4.7M557.67 384.8v-4.7M559.56 384.8v-4.7M561.45 384.8v-4.7M563.34 384.8v-4.7M565.23 384.8v-4.7M567.12 384.8v-4.7M569.01 384.8v-4.7M570.9 384.8v-4.7M572.79 384.8v-4.7M574.68 384.8v-4.7M576.57 384.8v-4.7M578.46 384.8v-4.7M580.35 384.8v-4.7M582.24 384.8v-4.7M584.13 384.8v-4.7M586.02 384.8v-4.7M587.91 384.8v-4.7M589.8 384.8v-4.7M591.69 384.8v-4.7M593.58 384.8v-4.7M595.47 384.8v-4.7M597.36 384.8v-4.7M599.25 384.8v-4.7M601.14 384.8v-4.7M603.03 384.8v-4.7M604.92 384.8v-4.7M606.81 384.8v-4.7M608.7 384.8v-4.7M610.59 384.8v-4.7M612.48 384.8v-4.7M614.37 384.8v-4.7M616.26 384.8v-4.7M618.15 384.8v-4.7M620.04 384.8v-4.7M621.93 384.8v-4.7M623.82 384.8v-4.7M625.71 384.8v-4.7M627.6 384.8v-4.7M629.49 384.8v-4.7M631.38 384.8v-4.7M633.27 384.8v-4.7M635.16 384.8v-4.7M637.05 384.8v-4.7M638.94 384.8v-4.7" stroke="#383838" stroke-width="0.75" fill="none"/></svg>
<div class="b" style="left:438.25px;top:376.2px;width:0.7px;height:8.6px;background:#1c1c1c;"></div>
<span class="l" style="left:438.83px;top:363px;font-size:7px;color:#2c2c2c;transform:scaleX(0.98);">00:20</span>
<div class="b" style="left:476.05px;top:376.2px;width:0.7px;height:8.6px;background:#1c1c1c;"></div>
<span class="l" style="left:476.63px;top:363px;font-size:7px;color:#2c2c2c;transform:scaleX(0.98);">00:40</span>
<div class="b" style="left:513.85px;top:376.2px;width:0.7px;height:8.6px;background:#1c1c1c;"></div>
<span class="l" style="left:514.43px;top:363px;font-size:7px;color:#2c2c2c;transform:scaleX(0.98);">01:00</span>
<div class="b" style="left:551.65px;top:376.2px;width:0.7px;height:8.6px;background:#1c1c1c;"></div>
<span class="l" style="left:552.23px;top:363px;font-size:7px;color:#2c2c2c;transform:scaleX(0.98);">01:20</span>
<div class="b" style="left:589.45px;top:376.2px;width:0.7px;height:8.6px;background:#1c1c1c;"></div>
<span class="l" style="left:590.03px;top:363px;font-size:7px;color:#2c2c2c;transform:scaleX(0.98);">01:40</span>
<div class="b" style="left:627.25px;top:376.2px;width:0.7px;height:8.6px;background:#1c1c1c;"></div>
<div class="b" style="left:627.3px;top:363px;width:12.8px;height:8px;overflow:hidden">
<span class="l" style="left:0.8px;top:0;font-size:7px;color:#2c2c2c;transform:scaleX(0.954)">02:00</span>
</div>
<div class="b" style="left:287px;top:385.2px;width:108.9px;height:32.9px;background:#fff;"></div>
<svg class="t" style="left:289.27px;top:385.05px;width:25.95px;height:9.66px;fill:#000;stroke:#000;" viewBox="0 -110.5 500 140" preserveAspectRatio="none"><text x="0" y="0" textLength="500" lengthAdjust="spacingAndGlyphs">パディング</text></svg>
<svg class="i" style="left:289.6px;top:403.8px;width:15.2px;height:9.8px" viewBox="0 0 15.2 9.8" fill="none" stroke="#747474" stroke-width="1"><path d="M0.7 4.8c3.4 -4.6 10 -4.6 13.6 0c-3.6 4.4 -10.2 4.4 -13.6 0z"/><circle cx="7.4" cy="4.6" r="1.7" fill="#747474" stroke="none"/><path d="M3.6 0.6l8.2 8.6" stroke-width="0.85"/></svg>
<div class="b" style="left:400.4px;top:385.2px;width:240.6px;height:32.9px;background:#fff;"></div>
<svg class="i" style="left:0;top:0;width:940px;height:480px" viewBox="0 0 940 480"><path d="M400.8 417.1v-4.7M402.69 417.1v-4.7M404.58 417.1v-4.7M406.47 417.1v-4.7M408.36 417.1v-4.7M410.25 417.1v-4.7M412.14 417.1v-4.7M414.03 417.1v-4.7M415.92 417.1v-4.7M417.81 417.1v-4.7M419.7 417.1v-4.7M421.59 417.1v-4.7M423.48 417.1v-4.7M425.37 417.1v-4.7M427.26 417.1v-4.7M429.15 417.1v-4.7M431.04 417.1v-4.7M432.93 417.1v-4.7M434.82 417.1v-4.7M436.71 417.1v-4.7M438.6 417.1v-4.7M440.49 417.1v-4.7M442.38 417.1v-4.7M444.27 417.1v-4.7M446.16 417.1v-4.7M448.05 417.1v-4.7M449.94 417.1v-4.7M451.83 417.1v-4.7M453.72 417.1v-4.7M455.61 417.1v-4.7M457.5 417.1v-4.7M459.39 417.1v-4.7M461.28 417.1v-4.7M463.17 417.1v-4.7M465.06 417.1v-4.7M466.95 417.1v-4.7M468.84 417.1v-4.7M470.73 417.1v-4.7M472.62 417.1v-4.7M474.51 417.1v-4.7M476.4 417.1v-4.7M478.29 417.1v-4.7M480.18 417.1v-4.7M482.07 417.1v-4.7M483.96 417.1v-4.7M485.85 417.1v-4.7M487.74 417.1v-4.7M489.63 417.1v-4.7M491.52 417.1v-4.7M493.41 417.1v-4.7M495.3 417.1v-4.7M497.19 417.1v-4.7M499.08 417.1v-4.7M500.97 417.1v-4.7M502.86 417.1v-4.7M504.75 417.1v-4.7M506.64 417.1v-4.7M508.53 417.1v-4.7M510.42 417.1v-4.7M512.31 417.1v-4.7M514.2 417.1v-4.7M516.09 417.1v-4.7M517.98 417.1v-4.7M519.87 417.1v-4.7M521.76 417.1v-4.7M523.65 417.1v-4.7M525.54 417.1v-4.7M527.43 417.1v-4.7M529.32 417.1v-4.7M531.21 417.1v-4.7M533.1 417.1v-4.7M534.99 417.1v-4.7M536.88 417.1v-4.7M538.77 417.1v-4.7M540.66 417.1v-4.7M542.55 417.1v-4.7M544.44 417.1v-4.7M546.33 417.1v-4.7M548.22 417.1v-4.7M550.11 417.1v-4.7M552 417.1v-4.7M553.89 417.1v-4.7M555.78 417.1v-4.7M557.67 417.1v-4.7M559.56 417.1v-4.7M561.45 417.1v-4.7M563.34 417.1v-4.7M565.23 417.1v-4.7M567.12 417.1v-4.7M569.01 417.1v-4.7M570.9 417.1v-4.7M572.79 417.1v-4.7M574.68 417.1v-4.7M576.57 417.1v-4.7M578.46 417.1v-4.7M580.35 417.1v-4.7M582.24 417.1v-4.7M584.13 417.1v-4.7M586.02 417.1v-4.7M587.91 417.1v-4.7M589.8 417.1v-4.7M591.69 417.1v-4.7M593.58 417.1v-4.7M595.47 417.1v-4.7M597.36 417.1v-4.7M599.25 417.1v-4.7M601.14 417.1v-4.7M603.03 417.1v-4.7M604.92 417.1v-4.7M606.81 417.1v-4.7M608.7 417.1v-4.7M610.59 417.1v-4.7M612.48 417.1v-4.7M614.37 417.1v-4.7M616.26 417.1v-4.7M618.15 417.1v-4.7M620.04 417.1v-4.7M621.93 417.1v-4.7M623.82 417.1v-4.7M625.71 417.1v-4.7M627.6 417.1v-4.7M629.49 417.1v-4.7M631.38 417.1v-4.7M633.27 417.1v-4.7M635.16 417.1v-4.7M637.05 417.1v-4.7M638.94 417.1v-4.7" stroke="#383838" stroke-width="0.75" fill="none"/></svg>
<div class="b" style="left:438.25px;top:408.5px;width:0.7px;height:8.6px;background:#1c1c1c;"></div>
<span class="l" style="left:438.83px;top:395px;font-size:7px;color:#2c2c2c;transform:scaleX(0.98);">00:20</span>
<div class="b" style="left:476.05px;top:408.5px;width:0.7px;height:8.6px;background:#1c1c1c;"></div>
<span class="l" style="left:476.63px;top:395px;font-size:7px;color:#2c2c2c;transform:scaleX(0.98);">00:40</span>
<div class="b" style="left:513.85px;top:408.5px;width:0.7px;height:8.6px;background:#1c1c1c;"></div>
<span class="l" style="left:514.43px;top:395px;font-size:7px;color:#2c2c2c;transform:scaleX(0.98);">01:00</span>
<div class="b" style="left:551.65px;top:408.5px;width:0.7px;height:8.6px;background:#1c1c1c;"></div>
<span class="l" style="left:552.23px;top:395px;font-size:7px;color:#2c2c2c;transform:scaleX(0.98);">01:20</span>
<div class="b" style="left:589.45px;top:408.5px;width:0.7px;height:8.6px;background:#1c1c1c;"></div>
<span class="l" style="left:590.03px;top:395px;font-size:7px;color:#2c2c2c;transform:scaleX(0.98);">01:40</span>
<div class="b" style="left:627.25px;top:408.5px;width:0.7px;height:8.6px;background:#1c1c1c;"></div>
<div class="b" style="left:627.3px;top:395px;width:12.8px;height:8px;overflow:hidden">
<span class="l" style="left:0.8px;top:0;font-size:7px;color:#2c2c2c;transform:scaleX(0.954)">02:00</span>
</div>
<div class="b" style="left:287px;top:417.5px;width:108.9px;height:32.1px;background:#dadada;"></div>
<svg class="t" style="left:289.38px;top:416.99px;width:20.69px;height:9.66px;fill:#000;stroke:#000;" viewBox="0 -110.5 300 140" preserveAspectRatio="none"><text x="0" y="0" textLength="300" lengthAdjust="spacingAndGlyphs">解像度</text></svg>
<div class="b" style="left:400.4px;top:417.5px;width:240.6px;height:32.1px;background:#e2e2e2;"></div>
<svg class="i" style="left:0;top:0;width:940px;height:480px" viewBox="0 0 940 480"><path d="M400.8 448.6v-4.7M402.69 448.6v-4.7M404.58 448.6v-4.7M406.47 448.6v-4.7M408.36 448.6v-4.7M410.25 448.6v-4.7M412.14 448.6v-4.7M414.03 448.6v-4.7M415.92 448.6v-4.7M417.81 448.6v-4.7M419.7 448.6v-4.7M421.59 448.6v-4.7M423.48 448.6v-4.7M425.37 448.6v-4.7M427.26 448.6v-4.7M429.15 448.6v-4.7M431.04 448.6v-4.7M432.93 448.6v-4.7M434.82 448.6v-4.7M436.71 448.6v-4.7M438.6 448.6v-4.7M440.49 448.6v-4.7M442.38 448.6v-4.7M444.27 448.6v-4.7M446.16 448.6v-4.7M448.05 448.6v-4.7M449.94 448.6v-4.7M451.83 448.6v-4.7M453.72 448.6v-4.7M455.61 448.6v-4.7M457.5 448.6v-4.7M459.39 448.6v-4.7M461.28 448.6v-4.7M463.17 448.6v-4.7M465.06 448.6v-4.7M466.95 448.6v-4.7M468.84 448.6v-4.7M470.73 448.6v-4.7M472.62 448.6v-4.7M474.51 448.6v-4.7M476.4 448.6v-4.7M478.29 448.6v-4.7M480.18 448.6v-4.7M482.07 448.6v-4.7M483.96 448.6v-4.7M485.85 448.6v-4.7M487.74 448.6v-4.7M489.63 448.6v-4.7M491.52 448.6v-4.7M493.41 448.6v-4.7M495.3 448.6v-4.7M497.19 448.6v-4.7M499.08 448.6v-4.7M500.97 448.6v-4.7M502.86 448.6v-4.7M504.75 448.6v-4.7M506.64 448.6v-4.7M508.53 448.6v-4.7M510.42 448.6v-4.7M512.31 448.6v-4.7M514.2 448.6v-4.7M516.09 448.6v-4.7M517.98 448.6v-4.7M519.87 448.6v-4.7M521.76 448.6v-4.7M523.65 448.6v-4.7M525.54 448.6v-4.7M527.43 448.6v-4.7M529.32 448.6v-4.7M531.21 448.6v-4.7M533.1 448.6v-4.7M534.99 448.6v-4.7M536.88 448.6v-4.7M538.77 448.6v-4.7M540.66 448.6v-4.7M542.55 448.6v-4.7M544.44 448.6v-4.7M546.33 448.6v-4.7M548.22 448.6v-4.7M550.11 448.6v-4.7M552 448.6v-4.7M553.89 448.6v-4.7M555.78 448.6v-4.7M557.67 448.6v-4.7M559.56 448.6v-4.7M561.45 448.6v-4.7M563.34 448.6v-4.7M565.23 448.6v-4.7M567.12 448.6v-4.7M569.01 448.6v-4.7M570.9 448.6v-4.7M572.79 448.6v-4.7M574.68 448.6v-4.7M576.57 448.6v-4.7M578.46 448.6v-4.7M580.35 448.6v-4.7M582.24 448.6v-4.7M584.13 448.6v-4.7M586.02 448.6v-4.7M587.91 448.6v-4.7M589.8 448.6v-4.7M591.69 448.6v-4.7M593.58 448.6v-4.7M595.47 448.6v-4.7M597.36 448.6v-4.7M599.25 448.6v-4.7M601.14 448.6v-4.7M603.03 448.6v-4.7M604.92 448.6v-4.7M606.81 448.6v-4.7M608.7 448.6v-4.7M610.59 448.6v-4.7M612.48 448.6v-4.7M614.37 448.6v-4.7M616.26 448.6v-4.7M618.15 448.6v-4.7M620.04 448.6v-4.7M621.93 448.6v-4.7M623.82 448.6v-4.7M625.71 448.6v-4.7M627.6 448.6v-4.7M629.49 448.6v-4.7M631.38 448.6v-4.7M633.27 448.6v-4.7M635.16 448.6v-4.7M637.05 448.6v-4.7M638.94 448.6v-4.7" stroke="#383838" stroke-width="0.75" fill="none"/></svg>
<div class="b" style="left:438.25px;top:440px;width:0.7px;height:8.6px;background:#1c1c1c;"></div>
<span class="l" style="left:438.83px;top:427px;font-size:7px;color:#2c2c2c;transform:scaleX(0.98);">00:20</span>
<div class="b" style="left:476.05px;top:440px;width:0.7px;height:8.6px;background:#1c1c1c;"></div>
<span class="l" style="left:476.63px;top:427px;font-size:7px;color:#2c2c2c;transform:scaleX(0.98);">00:40</span>
<div class="b" style="left:513.85px;top:440px;width:0.7px;height:8.6px;background:#1c1c1c;"></div>
<span class="l" style="left:514.43px;top:427px;font-size:7px;color:#2c2c2c;transform:scaleX(0.98);">01:00</span>
<div class="b" style="left:551.65px;top:440px;width:0.7px;height:8.6px;background:#1c1c1c;"></div>
<span class="l" style="left:552.23px;top:427px;font-size:7px;color:#2c2c2c;transform:scaleX(0.98);">01:20</span>
<div class="b" style="left:589.45px;top:440px;width:0.7px;height:8.6px;background:#1c1c1c;"></div>
<span class="l" style="left:590.03px;top:427px;font-size:7px;color:#2c2c2c;transform:scaleX(0.98);">01:40</span>
<div class="b" style="left:627.25px;top:440px;width:0.7px;height:8.6px;background:#1c1c1c;"></div>
<div class="b" style="left:627.3px;top:427px;width:12.8px;height:8px;overflow:hidden">
<span class="l" style="left:0.8px;top:0;font-size:7px;color:#2c2c2c;transform:scaleX(0.954)">02:00</span>
</div>
<div class="b" style="left:287px;top:320.45px;width:108.9px;height:1.5px;background:#484848;"></div>
<div class="b" style="left:287px;top:352.35px;width:108.9px;height:1.5px;background:#484848;"></div>
<div class="b" style="left:400.4px;top:352.35px;width:240.6px;height:1.5px;background:#484848;"></div>
<div class="b" style="left:287px;top:384.45px;width:108.9px;height:1.5px;background:#484848;"></div>
<div class="b" style="left:400.4px;top:384.45px;width:240.6px;height:1.5px;background:#484848;"></div>
<div class="b" style="left:287px;top:416.75px;width:108.9px;height:1.5px;background:#484848;"></div>
<div class="b" style="left:400.4px;top:416.75px;width:240.6px;height:1.5px;background:#484848;"></div>
<div class="b" style="left:400.4px;top:320.3px;width:240.6px;height:1.3px;background:#9c9c9c;"></div>
<div class="b" style="left:400.4px;top:321px;width:0.6px;height:109px;background:#b8b8b8;"></div>
<div class="b" style="left:287px;top:321px;width:1px;height:109px;background:#484848;"></div>
<div class="b" style="left:394.9px;top:321px;width:1px;height:109px;background:#484848;"></div>
<div class="b" style="left:640.1px;top:321px;width:0.9px;height:109px;background:#484848;"></div>
</div>
</div>
<div id="outputpanel">
<div class="b" style="left:71px;top:429.6px;width:798px;height:48.4px;background:#f0f0f0;"></div>
<div class="b" style="left:71px;top:429.3px;width:798px;height:0.5px;background:#e9e9e9;"></div>
<svg class="t" style="left:71.67px;top:432.59px;width:31.47px;height:9.66px;fill:#000;stroke:#000;" viewBox="0 -110.5 427.8 140" preserveAspectRatio="none"><text x="0" y="0" textLength="427.8" lengthAdjust="spacingAndGlyphs">出力方法:</text></svg>
<div class="b" style="left:121.6px;top:434px;width:89.1px;height:11px;background:#e2e2e2;box-shadow:inset 0 0 0 0.5px #cdcdcd;"></div>
<svg class="t" style="left:123.06px;top:433.92px;width:40.69px;height:9.66px;fill:#000;stroke:#000;" viewBox="0 -110.5 700 140" preserveAspectRatio="none"><text x="0" y="0" textLength="700" lengthAdjust="spacingAndGlyphs">フォルダに保存</text></svg>
<svg class="i" style="left:203.2px;top:438.1px;width:4.8px;height:3px" viewBox="0 0 4.8 3" fill="none" stroke="#4a4a4a" stroke-width="0.85"><path d="M0.4 0.5l2 2l2 -2"/></svg>
<svg class="t" style="left:72.33px;top:446.98px;width:23.9px;height:9.66px;fill:#000;stroke:#000;" viewBox="0 -110.5 327.8 140" preserveAspectRatio="none"><text x="0" y="0" textLength="327.8" lengthAdjust="spacingAndGlyphs">保存先:</text></svg>
<div class="b" style="left:121.6px;top:448.1px;width:684px;height:11.9px;background:#fff;box-shadow:inset 0 0 0 0.7px #a2a2a2;"></div>
<svg class="t" style="left:123.89px;top:448.67px;width:52.77px;height:9.66px;fill:#000;stroke:#000;" viewBox="0 -110.5 840.8 140" preserveAspectRatio="none"><text x="0" y="0" textLength="840.8" lengthAdjust="spacingAndGlyphs">V:¥カーナビ作成後</text></svg>
<svg class="i" style="left:121.6px;top:464.6px;width:80px;height:8.4px" viewBox="121.6 464.6 80 8.4"><circle cx="125.75" cy="468.8" r="3.3" fill="#fff" stroke="#333" stroke-width="0.6"/><circle cx="196.6" cy="468.8" r="3.3" fill="#fff" stroke="#333" stroke-width="0.6"/><circle cx="196.6" cy="468.8" r="1.95" fill="#1e1e1e"/></svg>
<svg class="t" style="left:131.18px;top:463.89px;width:19.02px;height:9.66px;fill:#000;stroke:#000;" viewBox="0 -110.5 300 140" preserveAspectRatio="none"><text x="0" y="0" textLength="300" lengthAdjust="spacingAndGlyphs">上書き</text></svg>
<svg class="t" style="left:201.9px;top:463.92px;width:164.94px;height:9.66px;fill:#000;stroke:#000;" viewBox="0 -110.5 2824.1 140" preserveAspectRatio="none"><text x="0" y="0" textLength="2824.1" lengthAdjust="spacingAndGlyphs">上書きしない(自動的にリネーム &lt;ファイル名 + インデックス&gt;)</text></svg>
<div class="b" style="left:811.3px;top:448.3px;width:57.7px;height:11.2px;background:#e1e1e1;box-shadow:inset 0 0 0 0.6px #b8b8b8;"></div>
<svg class="t" style="left:831.07px;top:448.48px;width:19.84px;height:9.66px;fill:#000;stroke:#000;" viewBox="0 -110.5 283.4 140" preserveAspectRatio="none"><text x="0" y="0" textLength="283.4" lengthAdjust="spacingAndGlyphs">参照...</text></svg>
<div class="b" style="left:811.3px;top:463.3px;width:57.7px;height:10.9px;background:#e1e1e1;box-shadow:inset 0 0 0 0.6px #b8b8b8;"></div>
<svg class="t" style="left:831.85px;top:463.07px;width:17.61px;height:9.66px;fill:#000;stroke:#000;" viewBox="0 -110.5 283.4 140" preserveAspectRatio="none"><text x="0" y="0" textLength="283.4" lengthAdjust="spacingAndGlyphs">開く...</text></svg>
</div>
</div>
<svg class="i" id="annotations" style="left:0;top:0;width:940px;height:480px" viewBox="0 0 940 480" fill="none" stroke="#de1824" stroke-width="5.2"><ellipse cx="177.55" cy="34.15" rx="22.75" ry="21.95"/><ellipse cx="261.1" cy="37.15" rx="24.5" ry="22.45"/></svg>
<div class="b" style="left:71px;top:477.8px;width:175.5px;height:2.2px;background:#b6b6c0;"></div>
<div class="b" style="left:246.5px;top:477.8px;width:443.5px;height:2.2px;background:#d6cadd;"></div>
<div class="b" style="left:690px;top:477.8px;width:12px;height:2.2px;background:#8e8e9c;"></div>
<div class="b" style="left:702px;top:477.8px;width:167px;height:2.2px;background:#bcbcbe;"></div>
</body></html>
